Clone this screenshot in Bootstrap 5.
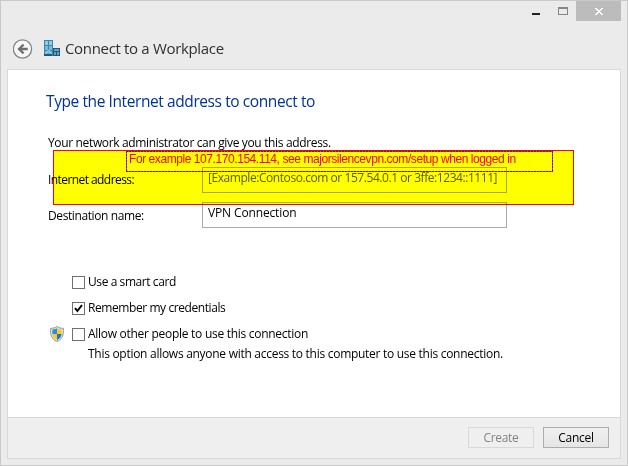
<!DOCTYPE html>
<html lang="en">
<head>
<meta charset="utf-8">
<meta name="viewport" content="width=device-width, initial-scale=1">
<title>Connect to a Workplace</title>
<link href="https://cdn.jsdelivr.net/npm/bootstrap@5.3.0/dist/css/bootstrap.min.css" rel="stylesheet">
<style>
body{font-family:"Open Sans","Noto Sans",sans-serif;font-size:12px;line-height:16px;color:#000;background:#ebebeb;letter-spacing:-.14px}
.window{width:628px;height:466px;background:#ebebeb;border:1px solid #c9c9c9;white-space:nowrap}
.titlebar{height:20px;padding-right:6px}
.close-btn{width:45px;height:20px;background:#bcbcbc}
.wizard-head{height:48px;padding:13px 0 0 12px}
.wizard-title{font-size:15px;line-height:22px;color:#303030;letter-spacing:-.33px;margin-left:4px;padding-top:3px}
.panel{width:614px;height:390px;margin-left:6px;border:1px solid #d9d9d9;background:#fff}
.form-area{height:347px;padding:20px 0 0 40px}
.main-title{font-size:15.5px;line-height:22px;color:#003399;letter-spacing:-.41px;margin:0 0 23px -2px}
.intro{letter-spacing:-.35px}
.field-row{height:26px;margin-bottom:9px}
.field-label{width:154px;padding-top:5px;letter-spacing:-.57px}
.field-label.dest{padding-top:6px;letter-spacing:-.4px}
.field-box{width:305px;height:26px;border:1px solid #ababab;padding:2px 5px}
.hint{color:#5c5c5c;letter-spacing:-.44px}
.options{margin-top:41px;padding-left:24px}
.option-row{height:26px}
.tick{width:13px;height:13px;border:1px solid #707070;background:#fff;margin-right:3px}
.opt-short{letter-spacing:-.42px}
.opt-long{letter-spacing:-.28px}
.opt-note{margin-top:-1px}
.shield{margin:0 8px 0 -22px}
.panel-footer{height:41px;background:#efefef;border-top:1px solid #d9d9d9;padding:9px 11px 0 0;gap:9px}
.dlg-btn{width:66px;height:21px;padding:0;border:1px solid #acacac;border-radius:0;background:linear-gradient(#f0f0f0,#e5e5e5);font-size:12px;line-height:18px;color:#000;letter-spacing:-.3px}
.dlg-btn:disabled{border-color:#d9d9d9;background:#efefef;color:#838383;opacity:1}
/* highlighter annotation laid over the form */
.highlight{left:53px;top:150px;width:521px;height:55px;border:1px solid #f00;background:#ff0;mix-blend-mode:multiply}
.note{left:126px;top:151px;width:427px;height:21px;padding:1px 3px;font:12px/15px "Liberation Sans",Arial,sans-serif;letter-spacing:-.43px;color:#f00;white-space:nowrap;
  --dash:#a00 0 2px,#3a8a8a 2px 3px;
  background:repeating-linear-gradient(90deg,var(--dash)) top/100% 1px,repeating-linear-gradient(90deg,var(--dash)) bottom/100% 1px,repeating-linear-gradient(var(--dash)) left/1px 100%,repeating-linear-gradient(var(--dash)) right/1px 100%;background-repeat:no-repeat}
</style>
</head>
<body class="position-relative overflow-hidden">
<div class="window">
  <div class="titlebar d-flex justify-content-end">
    <svg width="50" height="20" viewBox="526 1 50 20" shape-rendering="crispEdges"><path fill="#222" d="M532 13h8v2h-8z"/><path fill="#858585" fill-rule="evenodd" d="M558 7h10v8h-10zM559 9v5h8V9z"/></svg>
    <div class="close-btn"><svg class="d-block" width="45" height="20" viewBox="576 1 45 20" shape-rendering="crispEdges"><path fill="#fff" d="M595 8h2v1h1v1h2v-1h1v-1h2v1h-1v1h-1v1h-1v1h1v1h1v1h1v1h-2v-1h-1v-1h-2v1h-1v1h-2v-1h1v-1h1v-1h1v-1h-1v-1h-1v-1h-1z"/></svg></div>
  </div>
  <div class="wizard-head d-flex">
    <svg width="48" height="28" viewBox="13 34 48 28">
      <circle cx="22.5" cy="49" r="9.1" fill="#f8f8f8" stroke="#858585" stroke-width="1.3"/>
      <path d="M27.8 49H19m4.6-4.4L19 49l4.6 4.4" fill="none" stroke="#707070" stroke-width="2.3"/>
      <path fill="#3f87a6" d="M44 40h9v16h-9z"/><path fill="#93c9e5" d="M45 41h3v4h-3zm4 0h3v4h-3z"/><path fill="#76b9df" d="M45 46h3v4h-3zm4 0h3v4h-3z"/><path fill="#64b2dc" d="M45 51h7v3h-7z"/><path d="M45.5 54l3-4 3 4" fill="none" stroke="#bfe3f2" stroke-width=".8"/><path fill="#245573" d="M44 54h8v2h-8zm9-6h7v8h-7z"/><path fill="#5ba3c9" d="M54 49h5v2h-5zm0 3h2v3h-2zm3 0h2v3h-2z"/>
    </svg>
    <div class="wizard-title">Connect to a Workplace</div>
  </div>
  <main class="panel">
    <div class="form-area">
      <h1 class="main-title fw-normal">Type the Internet address to connect to</h1>
      <div class="intro mb-3">Your network administrator can give you this address.</div>
      <div class="field-row d-flex"><div class="field-label">Internet address:</div><div class="field-box hint">[Example:Contoso.com or 157.54.0.1 or 3ffe:1234::1111]</div></div>
      <div class="field-row d-flex"><div class="field-label dest">Destination name:</div><div class="field-box">VPN Connection</div></div>
      <div class="options">
        <div class="option-row d-flex align-items-center"><span class="tick"></span><span class="opt-short">Use a smart card</span></div>
        <div class="option-row d-flex align-items-center"><span class="tick d-flex"><svg width="11" height="11" viewBox="0 0 11 11"><path d="M2 5.2L4.4 8 9 2" fill="none" stroke="#000" stroke-width="2"/></svg></span><span class="opt-short">Remember my credentials</span></div>
        <div class="option-row d-flex align-items-center">
          <svg class="shield" width="14" height="16" viewBox="0 0 14 16"><path d="M7 .5C5 2 3 2.4.7 2.3.2 8.3 1.2 13 7 15.5 12.8 13 13.8 8.3 13.3 2.3 11 2.4 9 2 7 .5z" fill="#e2e5e7" stroke="#8d9499"/><path fill="#2d8ade" d="M7 2.3C5.5 3.2 4 3.6 2.4 3.6V8H7z"/><path fill="#fbcb20" d="M7 2.3c1.5.9 3 1.3 4.6 1.3V8H7zM2.4 8H7v5.9C4 12.5 2.7 10.6 2.4 8z"/><path fill="#1978d2" d="M7 8h4.6c-.3 2.6-1.6 4.5-4.6 5.9z"/></svg>
          <span class="tick"></span><span class="opt-long">Allow other people to use this connection</span>
        </div>
        <div class="ps-3 opt-long opt-note">This option allows anyone with access to this computer to use this connection.</div>
      </div>
    </div>
    <div class="panel-footer d-flex justify-content-end">
      <button class="btn dlg-btn" disabled>Create</button><button class="btn dlg-btn">Cancel</button>
    </div>
  </main>
</div>
<div class="highlight position-absolute"></div>
<div class="note position-absolute">For example 107.170.154.114, see majorsilencevpn.com/setup when logged in</div>
<script src="https://cdn.jsdelivr.net/npm/bootstrap@5.3.0/dist/js/bootstrap.bundle.min.js"></script>
</body>
</html>
